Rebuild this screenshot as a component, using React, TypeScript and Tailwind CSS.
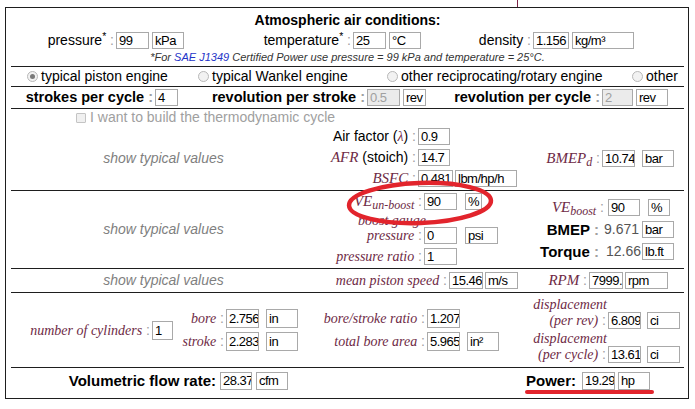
import clsx from 'clsx';
import type { ReactNode } from 'react';

const SANS = "font-['Liberation_Sans',Arial,sans-serif]";
const SERIF = "font-['Liberation_Serif','Times_New_Roman',serif] italic text-[#6e2a45]";

function Box({ children, className, disabled }: { children?: ReactNode; className?: string; disabled?: boolean }) {
  return (
    <div
      className={clsx(
        'h-[17px] shrink-0 border border-[#a9a9a9] pl-[2px] text-[13px] tracking-[-0.5px] leading-[15px] whitespace-nowrap overflow-hidden font-normal',
        disabled ? 'bg-[#ebebeb] text-[#a0a0a0]' : 'bg-white text-black',
        className
      )}
    >
      {children}
    </div>
  );
}

const Colon = () => <span className="text-[#a0a0a0]"> :</span>;

function Label({ children, className }: { children: ReactNode; className?: string }) {
  return <div className={clsx('shrink-0 text-right whitespace-nowrap pr-[2px]', className)}>{children}</div>;
}

function Radio({ checked, label }: { checked?: boolean; label: string }) {
  return (
    <div className="flex items-center">
      <span className="w-[11px] h-[11px] rounded-full border border-[#b8b8b8] bg-[#f2f2f2] flex items-center justify-center">
        {checked && <span className="w-[5px] h-[5px] rounded-full bg-[#7a7a7a]" />}
      </span>
      <span className="ml-[3px]">{label}</span>
    </div>
  );
}

const Typical = () => <span className="italic text-[#7f7f7f] text-[14px]">show typical values</span>;

export default function App() {
  return (
    <div className={clsx('w-[695px] h-[409px] bg-white text-black text-[14px] leading-[17px]', SANS)}>
      <div className="h-[7px]">
        <div className="ml-[517px] w-px h-full bg-[#7c2346]" />
      </div>
      <div className="relative ml-[5px] w-[684px] h-[392px] border border-[#1e1e1e] pl-[5px] pr-[4px]">
        {/* atmospheric conditions */}
        <div className="h-[59px] border-b border-[#1e1e1e] pt-[4px]">
          <div className="text-center font-bold text-[14px] leading-[17px]">Atmospheric air conditions:</div>
          <div className="flex items-center h-[17px] mt-[3px]">
            <Label className="w-[105px]">
              pressure<sup>*</sup>
              <Colon />
            </Label>
            <Box className="w-[33px]">99</Box>
            <Box className="ml-[3px] w-[32px]">kPa</Box>
            <Label className="w-[169px]">
              temperature<sup>*</sup>
              <Colon />
            </Label>
            <Box className="w-[33px]">25</Box>
            <Box className="ml-[3px] w-[32px]">°C</Box>
            <Label className="w-[112px]">
              density
              <Colon />
            </Label>
            <Box className="w-[36px]">1.156</Box>
            <Box className="ml-[3px] w-[62px]">kg/m³</Box>
          </div>
          <div className="mt-[2px] text-center italic text-[11px] leading-[13px] text-[#333]">
            *For <span className="text-[#2434c8]">SAE J1349</span> Certified Power use pressure = 99 kPa and temperature = 25°C.
          </div>
        </div>

        {/* engine type */}
        <div className="h-[20px] border-b border-[#1e1e1e] flex items-center">
          <div className="w-[187px] pl-[16px]">
            <Radio checked label="typical piston engine" />
          </div>
          <div className="w-[189px]">
            <Radio label="typical Wankel engine" />
          </div>
          <div className="w-[245px]">
            <Radio label="other reciprocating/rotary engine" />
          </div>
          <Radio label="other" />
        </div>

        {/* strokes */}
        <div className="h-[22px] border-b border-[#1e1e1e] flex items-center font-bold text-[14.5px]">
          <Label className="w-[144px]">
            strokes per cycle
            <Colon />
          </Label>
          <Box className="w-[23px]">4</Box>
          <Label className="w-[189px]">
            revolution per stroke
            <Colon />
          </Label>
          <Box disabled className="w-[33px]">
            0.5
          </Box>
          <Box className="ml-[3px] w-[23px]">rev</Box>
          <Label className="w-[176px]">
            revolution per cycle
            <Colon />
          </Label>
          <Box disabled className="w-[31px]">
            2
          </Box>
          <Box className="ml-[3px] w-[32px]">rev</Box>
        </div>

        {/* air factor block */}
        <div className="h-[82px] border-b border-[#1e1e1e] flex flex-col">
          <div className="h-[17px] flex items-center pl-[65px] text-[#a0a0a0]">
            <span className="w-[10px] h-[10px] border border-[#c4c4c4] bg-[#f0f0f0] rounded-[1px]" />
            <span className="ml-[4px]">I want to build the thermodynamic cycle</span>
          </div>
          <div className="flex flex-1">
            <div className="w-[305px] flex items-center justify-center">
              <Typical />
            </div>
            <div className="w-[204px] flex flex-col gap-[4px] pt-[2px]">
              <div className="flex items-center">
                <Label className="w-[102px]">
                  Air factor (<span className={SERIF}>λ</span>)
                  <Colon />
                </Label>
                <Box className="w-[32px]">0.9</Box>
              </div>
              <div className="flex items-center">
                <Label className="w-[102px]">
                  <span className={clsx(SERIF, 'text-[15px]')}>AFR</span> (stoich)
                  <Colon />
                </Label>
                <Box className="w-[32px]">14.7</Box>
              </div>
              <div className="flex items-center">
                <Label className="w-[102px]">
                  <span className={clsx(SERIF, 'text-[15px]')}>BSFC</span>
                  <Colon />
                </Label>
                <Box className="w-[35px]">0.481</Box>
                <Box className="ml-[2px] w-[62px]">lbm/hp/h</Box>
              </div>
            </div>
            <div className="flex-1 flex items-center">
              <Label className="w-[82px]">
                <span className={clsx(SERIF, 'text-[15px]')}>
                  BMEP<sub className="text-[12px]">d</sub>
                </span>
                <Colon />
              </Label>
              <Box className="w-[33px]">10.74</Box>
              <Box className="ml-[7px] w-[32px]">bar</Box>
            </div>
          </div>
        </div>

        {/* volumetric efficiency block */}
        <div className="h-[78px] border-b border-[#1e1e1e] flex">
          <div className="w-[305px] flex items-center justify-center">
            <Typical />
          </div>
          <div className="w-[204px] flex flex-col pt-[2px]">
            <div className="flex items-center h-[17px]">
              <Label className="w-[108px]">
                <span className={clsx(SERIF, 'text-[15px]')}>
                  VE<sub className="text-[12px]">un-boost</sub>
                </span>
                <Colon />
              </Label>
              <Box className="w-[33px]">90</Box>
              <Box className="ml-[8px] w-[17px]">%</Box>
            </div>
            <div className={clsx('w-[110px] h-[16px] text-right leading-[21px] overflow-visible', SERIF)}>boost gauge</div>
            <div className="flex items-center h-[17px] mt-[1px]">
              <Label className="w-[108px]">
                <span className={SERIF}>pressure</span>
                <Colon />
              </Label>
              <Box className="w-[33px]">0</Box>
              <Box className="ml-[8px] w-[33px]">psi</Box>
            </div>
            <div className="flex items-center h-[17px] mt-[4px]">
              <Label className="w-[108px]">
                <span className={SERIF}>pressure ratio</span>
                <Colon />
              </Label>
              <Box className="w-[33px]">1</Box>
            </div>
          </div>
          <div className="flex-1 flex flex-col justify-center gap-[5px]">
            <div className="flex items-center h-[17px]">
              <Label className="w-[86px]">
                <span className={clsx(SERIF, 'text-[15px]')}>
                  VE<sub className="text-[12px]">boost</sub>
                </span>
                <Colon />
              </Label>
              <Box className="ml-[2px] w-[32px]">90</Box>
              <Box className="ml-[8px] w-[22px]">%</Box>
            </div>
            <div className="flex items-center h-[17px]">
              <Label className="w-[81px] font-bold text-[15px]">
                BMEP
                <Colon />
              </Label>
              <div className="w-[40px] text-right pr-[2px] text-[#555]">9.671</div>
              <Box className="ml-[1px] w-[32px]">bar</Box>
            </div>
            <div className="flex items-center h-[17px]">
              <Label className="w-[81px] font-bold text-[15px]">
                Torque
                <Colon />
              </Label>
              <div className="w-[40px] text-right text-[#555]">12.66</div>
              <Box className="ml-[1px] w-[32px]">lb.ft</Box>
            </div>
          </div>
        </div>

        {/* speeds */}
        <div className="h-[24px] border-b border-[#1e1e1e] flex items-center">
          <div className="w-[305px] flex justify-center">
            <Typical />
          </div>
          <Label className="w-[133px]">
            <span className={SERIF}>mean piston speed</span>
            <Colon />
          </Label>
          <Box className="w-[34px]">15.46</Box>
          <Box className="ml-[2px] w-[33px]">m/s</Box>
          <Label className="w-[71px]">
            <span className={clsx(SERIF, 'text-[15px]')}>RPM</span>
            <Colon />
          </Label>
          <Box className="w-[34px]">7999.99</Box>
          <Box className="ml-[2px] w-[43px]">rpm</Box>
        </div>

        {/* geometry */}
        <div className="h-[75px] border-b border-[#1e1e1e] flex items-center">
          <Label className="w-[141px]">
            <span className={SERIF}>number of cylinders</span>
            <Colon />
          </Label>
          <Box className="w-[21px] h-[19px] leading-[17px]">1</Box>
          <div className="flex flex-col gap-[4px]">
            <div className="flex items-center h-[19px]">
              <Label className="w-[53px]">
                <span className={SERIF}>bore</span>
                <Colon />
              </Label>
              <Box className="w-[33px] h-[19px] leading-[17px]">2.756</Box>
              <Box className="ml-[7px] w-[32px] h-[19px] leading-[17px]">in</Box>
            </div>
            <div className="flex items-center h-[19px]">
              <Label className="w-[53px]">
                <span className={SERIF}>stroke</span>
                <Colon />
              </Label>
              <Box className="w-[33px] h-[19px] leading-[17px]">2.283</Box>
              <Box className="ml-[7px] w-[32px] h-[19px] leading-[17px]">in</Box>
            </div>
          </div>
          <div className="w-[201px] flex flex-col gap-[4px]">
            <div className="flex items-center h-[19px]">
              <Label className="w-[129px]">
                <span className={SERIF}>bore/stroke ratio</span>
                <Colon />
              </Label>
              <Box className="w-[33px] h-[19px] leading-[17px]">1.207</Box>
            </div>
            <div className="flex items-center h-[19px]">
              <Label className="w-[129px]">
                <span className={SERIF}>total bore area</span>
                <Colon />
              </Label>
              <Box className="w-[33px] h-[19px] leading-[17px]">5.965</Box>
              <Box className="ml-[7px] w-[32px] h-[19px] leading-[17px]">in²</Box>
            </div>
          </div>
          <div className="self-stretch flex flex-col pt-[3px]">
            <div className={clsx('w-[109px] h-[16px] text-right pr-[1px]', SERIF)}>displacement</div>
            <div className="flex items-center h-[17px]">
              <Label className="w-[109px]">
                <span className={SERIF}>(per rev)</span>
                <Colon />
              </Label>
              <Box className="w-[33px]">6.809</Box>
              <Box className="ml-[6px] w-[33px]">ci</Box>
            </div>
            <div className={clsx('w-[109px] h-[17px] text-right pr-[1px] leading-[19px]', SERIF)}>displacement</div>
            <div className="flex items-center h-[17px]">
              <Label className="w-[109px]">
                <span className={SERIF}>(per cycle)</span>
                <Colon />
              </Label>
              <Box className="w-[33px]">13.61</Box>
              <Box className="ml-[6px] w-[33px]">ci</Box>
            </div>
          </div>
        </div>

        {/* results */}
        <div className="relative h-[30px] flex items-start pt-[4px]">
          <Label className="w-[209px] font-bold text-[15px] pr-[4px] leading-[18px]">Volumetric flow rate:</Label>
          <Box className="w-[32px] h-[18px] leading-[16px]">28.37</Box>
          <Box className="ml-[4px] w-[32px] h-[18px] leading-[16px]">cfm</Box>
          <Label className="w-[294px] font-bold text-[15px] pr-[6px] leading-[18px]">Power:</Label>
          <Box className="w-[33px] h-[18px] leading-[16px]">19.29</Box>
          <Box className="ml-[3px] w-[32px] h-[18px] leading-[16px]">hp</Box>
          <div className="absolute left-[514px] top-[22px] w-[129px] h-[4px] rounded-full bg-[#e2242c]" />
        </div>

        {/* hand-drawn highlight */}
        <svg className="absolute left-[334px] top-[168px] pointer-events-none" width="160" height="56" viewBox="0 0 160 56">
          <ellipse
            cx="80"
            cy="27"
            rx="71"
            ry="20"
            fill="none"
            stroke="#e2242c"
            strokeWidth="4.5"
            transform="rotate(-2 80 27)"
          />
        </svg>
      </div>
    </div>
  );
}
